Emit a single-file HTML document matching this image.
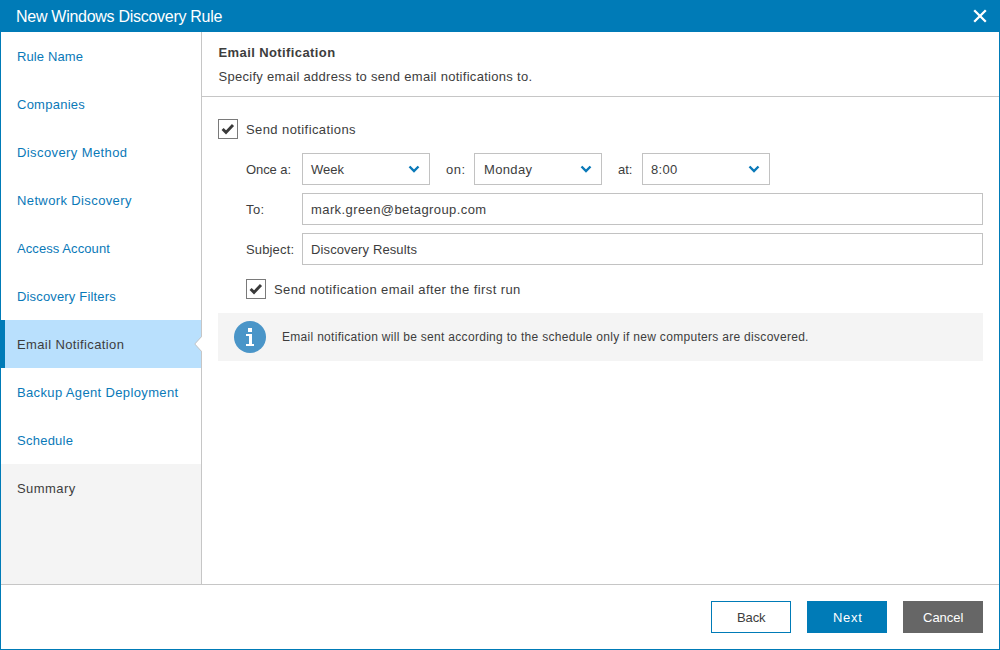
<!DOCTYPE html>
<html>
<head>
<meta charset="utf-8">
<style>
html,body{margin:0;padding:0;width:1000px;height:650px;overflow:hidden;background:#fff;}
body{position:relative;font-family:"Liberation Sans",sans-serif;font-size:13px;color:#3d3d3d;}
.a{position:absolute;}
.t{position:absolute;white-space:pre;line-height:16px;height:16px;}
#win{position:absolute;left:0;top:0;width:1000px;height:650px;box-sizing:border-box;border:1px solid #007bb7;border-top:0;}
#bar{position:absolute;left:0;top:0;width:1000px;height:32px;background:#007bb7;}
#side{position:absolute;left:1px;top:32px;width:200px;height:552px;background:#fff;}
#sideline{position:absolute;left:201px;top:32px;width:1px;height:552px;background:#c6c6c6;}
#graybot{position:absolute;left:1px;top:464px;width:200px;height:120px;background:#f4f4f4;}
#active{position:absolute;left:1px;top:320px;width:200px;height:48px;background:#b9e0fd;}
#activebar{position:absolute;left:1px;top:320px;width:4px;height:48px;background:#007bb7;}
.nav{color:#0a79b8;left:17px;}
#footline{position:absolute;left:1px;top:584px;width:998px;height:1px;background:#c6c6c6;}
#sep{position:absolute;left:202px;top:96px;width:797px;height:1px;background:#c6c6c6;}
.cb{position:absolute;width:18px;height:18px;border:1px solid #7a7a7a;background:#fff;}
.inp{position:absolute;box-sizing:border-box;height:32px;border:1px solid #c2c2c2;background:#fff;}
.btn{position:absolute;box-sizing:border-box;top:601px;width:80px;height:32px;}
</style>
</head>
<body>
<div id="win"></div>
<div id="bar"></div>
<div class="t" style="left:16px;top:8px;font-size:16px;line-height:18px;height:18px;color:#fff;letter-spacing:-0.28px">New Windows Discovery Rule</div>
<svg class="a" style="left:972px;top:8px" width="16" height="16" viewBox="0 0 16 16"><path d="M2.2 2.2L13.8 13.8M13.8 2.2L2.2 13.8" stroke="#fff" stroke-width="2.3" fill="none"/></svg>

<!-- sidebar -->
<div id="graybot"></div>
<div id="active"></div>
<div id="activebar"></div>
<div id="sideline"></div>
<svg class="a" style="left:193px;top:334px" width="10" height="20" viewBox="0 0 10 20"><path d="M9 2.5 L2 10 L9 17.5 Z" fill="#fff"/><path d="M8.5 2.5 L1.8 10 L8.5 17.5" stroke="#c6c6c6" stroke-width="1" fill="none"/></svg>

<div class="t nav" style="top:49px;letter-spacing:0.12px">Rule Name</div>
<div class="t nav" style="top:97px;letter-spacing:0.25px">Companies</div>
<div class="t nav" style="top:145px;letter-spacing:0.4px">Discovery Method</div>
<div class="t nav" style="top:193px;letter-spacing:0.38px">Network Discovery</div>
<div class="t nav" style="top:241px;letter-spacing:0.08px">Access Account</div>
<div class="t nav" style="top:289px;letter-spacing:0.16px">Discovery Filters</div>
<div class="t nav" style="top:337px;letter-spacing:0.38px;color:#3d3d3d">Email Notification</div>
<div class="t nav" style="top:385px;letter-spacing:0.36px">Backup Agent Deployment</div>
<div class="t nav" style="top:433px;letter-spacing:0.25px">Schedule</div>
<div class="t nav" style="top:481px;letter-spacing:0.42px;color:#3d3d3d">Summary</div>

<div id="footline"></div>
<div id="sep"></div>

<!-- main -->
<div class="t" style="left:218.5px;top:45px;font-weight:bold;letter-spacing:0.4px">Email Notification</div>
<div class="t" style="left:218.5px;top:69px;letter-spacing:0.29px">Specify email address to send email notifications to.</div>

<div class="cb" style="left:218px;top:119px"></div>
<svg class="a" style="left:218px;top:119px" width="20" height="20" viewBox="0 0 20 20"><path d="M4.6 10 L8 13.4 L15 6.1" stroke="#3a3a3a" stroke-width="2.9" fill="none"/></svg>
<div class="t" style="left:246px;top:122px;letter-spacing:0.41px">Send notifications</div>

<div class="t" style="left:246px;top:162px;letter-spacing:-0.08px">Once a:</div>
<div class="inp" style="left:302px;top:153px;width:128px"></div>
<div class="t" style="left:311px;top:162px">Week</div>
<svg class="a" style="left:407px;top:164px" width="14" height="10" viewBox="0 0 14 10"><path d="M2.5 2.5 L7 7 L11.5 2.5" stroke="#0a79b8" stroke-width="2.4" fill="none"/></svg>

<div class="t" style="left:446px;top:162px;letter-spacing:0.5px">on:</div>
<div class="inp" style="left:474px;top:153px;width:128px"></div>
<div class="t" style="left:484px;top:162px;letter-spacing:0.35px">Monday</div>
<svg class="a" style="left:579px;top:164px" width="14" height="10" viewBox="0 0 14 10"><path d="M2.5 2.5 L7 7 L11.5 2.5" stroke="#0a79b8" stroke-width="2.4" fill="none"/></svg>

<div class="t" style="left:618px;top:162px">at:</div>
<div class="inp" style="left:642px;top:153px;width:128px"></div>
<div class="t" style="left:651px;top:162px;letter-spacing:0.3px">8:00</div>
<svg class="a" style="left:747px;top:164px" width="14" height="10" viewBox="0 0 14 10"><path d="M2.5 2.5 L7 7 L11.5 2.5" stroke="#0a79b8" stroke-width="2.4" fill="none"/></svg>

<div class="t" style="left:246px;top:202px;letter-spacing:0.4px">To:</div>
<div class="inp" style="left:302px;top:193px;width:681px"></div>
<div class="t" style="left:311px;top:202px;letter-spacing:0.41px">mark.green@betagroup.com</div>

<div class="t" style="left:246px;top:242px;letter-spacing:0.15px">Subject:</div>
<div class="inp" style="left:302px;top:233px;width:681px"></div>
<div class="t" style="left:311px;top:242px;letter-spacing:0.12px">Discovery Results</div>

<div class="cb" style="left:246px;top:279px"></div>
<svg class="a" style="left:246px;top:279px" width="20" height="20" viewBox="0 0 20 20"><path d="M4.6 10 L8 13.4 L15 6.1" stroke="#3a3a3a" stroke-width="2.9" fill="none"/></svg>
<div class="t" style="left:274px;top:282px;letter-spacing:0.41px">Send notification email after the first run</div>

<div class="a" style="left:218px;top:313px;width:765px;height:48px;background:#f4f4f4"></div>
<svg class="a" style="left:234px;top:321px" width="32" height="32" viewBox="0 0 32 32"><circle cx="16" cy="16" r="16" fill="#4a95c8"/><rect x="14" y="7" width="4" height="4" fill="#fff"/><rect x="12" y="13" width="6" height="2" fill="#fff"/><rect x="15" y="13" width="3" height="11" fill="#fff"/><rect x="12" y="23" width="8" height="2" fill="#fff"/></svg>
<div class="t" style="left:282px;top:329px;font-size:12px;letter-spacing:0.3px">Email notification will be sent according to the schedule only if new computers are discovered.</div>

<!-- buttons -->
<div class="btn" style="left:711px;border:1px solid #007bb7;background:#fff"></div>
<div class="t" style="left:737px;top:610px;letter-spacing:-0.1px">Back</div>
<div class="btn" style="left:807px;background:#007bb7"></div>
<div class="t" style="left:833px;top:610px;color:#fff;letter-spacing:0.67px">Next</div>
<div class="btn" style="left:903px;background:#666"></div>
<div class="t" style="left:923px;top:610px;color:#fff">Cancel</div>
</body>
</html>
